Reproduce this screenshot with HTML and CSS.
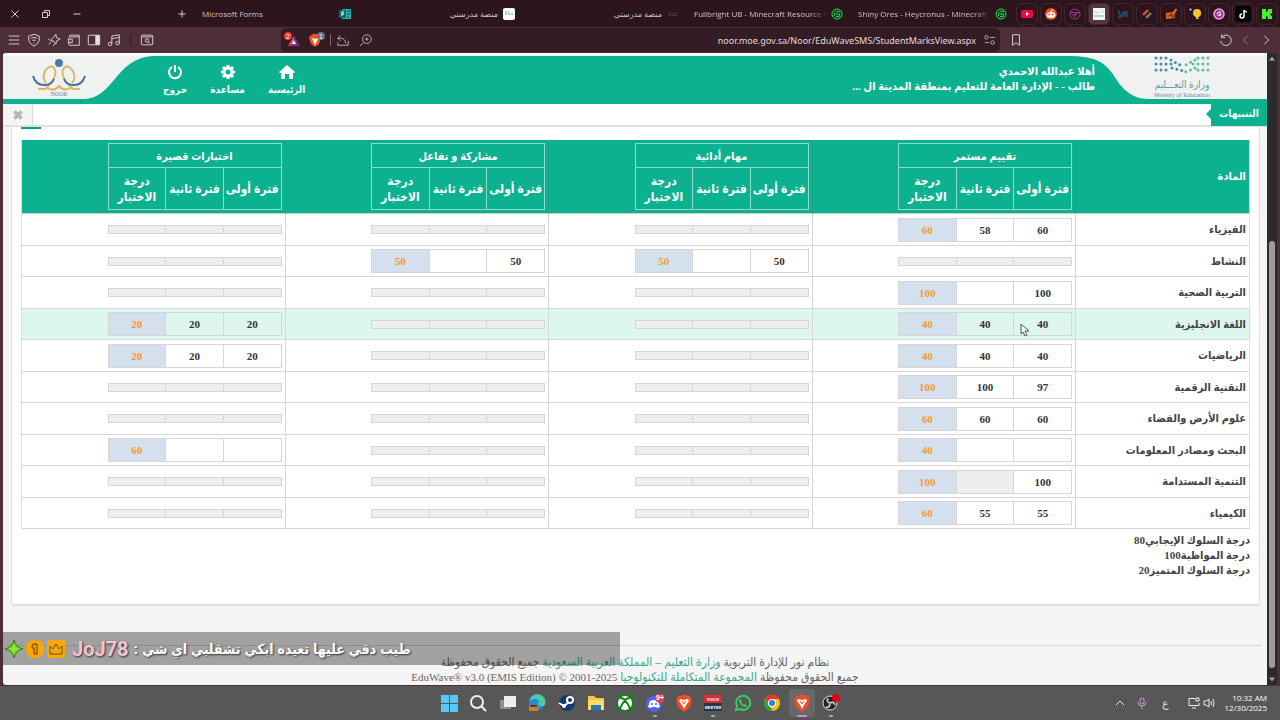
FILE: index.html
```html
<!DOCTYPE html>
<html lang="ar">
<head>
    <meta charset="UTF-8">
    <meta name="viewport" content="width=device-width, initial-scale=1.0">
    <title>نظام نور</title>
    <link rel="stylesheet" href="styles.css">
</head>
<body>

<div class="tabs">
    <div class="window-buttons">
        <button aria-label="Close"><svg viewBox="0 0 16 16"><path d="M4.500 4.500l7 7M11.500 4.500l-7 7"/></svg></button>
        <button aria-label="Restore"><svg viewBox="0 0 16 16"><path d="M4.500 6.500h5v5h-5zM6.500 6V4.500h5v5H10"/></svg></button>
        <button aria-label="Minimize"><svg viewBox="0 0 16 16"><path d="M4.500 8h7"/></svg></button>
    </div>
    <button class="new-tab" aria-label="New tab"><svg viewBox="0 0 16 16"><path d="M8 4.500v7M4.500 8h7"/></svg></button>
    <div class="tab"><span class="tab-title">Microsoft Forms</span>
        <svg viewBox="0 0 12 12"><rect x="3" y="1" width="9" height="10" rx="1" fill="#2bb5a3"/><path d="M8 3h3M8 6h3M8 9h2" stroke="#0b4a4c"/><rect y="2" width="7" height="8" rx="1" fill="#06706f"/><path d="M5 4H3v4M3 6h2" stroke="#fff"/></svg></div>
    <div class="tab"><span class="tab-title" dir="rtl">منصة مدرستي</span>
        <svg viewBox="0 0 12 12"><rect width="12" height="12" rx="2" fill="#fff"/><path d="M2 4h4M2 6h8" stroke="#4aa58e" stroke-dasharray="2 1"/></svg></div>
    <div class="tab"><span class="tab-title" dir="rtl">منصة مدرستي</span>
        <svg viewBox="0 0 12 12"><path d="M1 5.500h10M2 7.500h8" stroke="#35504f" stroke-dasharray="2 1"/></svg></div>
    <div class="tab"><span class="tab-title fade">Fullbright UB - Minecraft Resource P</span>
        <svg viewBox="0 0 12 12"><circle cx="6" cy="6" r="5" fill="#103a1e" stroke="#35cf63"/><path d="M9 3.500C5 2.500 3 5 3.500 8M5 8.500h3L8.500 6H5" stroke="#35cf63"/></svg></div>
    <div class="tab"><span class="tab-title fade">Shiny Ores - Heycronus - Minecraft R</span>
        <svg viewBox="0 0 12 12"><circle cx="6" cy="6" r="5" fill="#103a1e" stroke="#35cf63"/><path d="M9 3.500C5 2.500 3 5 3.500 8M5 8.500h3L8.500 6H5" stroke="#35cf63"/></svg></div>
    <div class="pinned">
        <button aria-label="YouTube"><svg viewBox="0 0 12 12"><rect y="2" width="12" height="8" rx="2" fill="#ee0b3c"/><path d="M5 4l3 2-3 2z" fill="#fff"/></svg></button>
        <button aria-label="Reddit"><svg viewBox="0 0 12 12"><circle cx="6" cy="6" r="6" fill="#f04a16"/><ellipse cx="6" cy="7" rx="4.500" ry="3" fill="#fff"/><circle cx="4.300" cy="6.500" r="1" fill="#f04a16"/><circle cx="7.700" cy="6.500" r="1" fill="#f04a16"/><path d="M6 4l.5-2 2 .5M4.300 8.500q1.700 1 3.400 0" stroke="#fff"/></svg></button>
        <button aria-label="Forum"><svg viewBox="0 0 12 12"><circle cx="6" cy="6" r="5" stroke="#a43a91"/><path d="M2 4.500h8M3 7l5-1M5 9l3-4" stroke="#a43a91"/></svg></button>
        <button class="current" aria-label="Noor"><svg viewBox="0 0 12 12"><path d="M0 0h12v12H0z" fill="#f4f4f2"/><path d="M1 3l4 2M11 3L7 5" stroke="#8cc8b5" stroke-dasharray="1 1"/><path d="M1 8h10" stroke="#73b6a6"/></svg></button>
        <button aria-label="VPN"><svg viewBox="0 0 12 12"><path d="M1 2l3 7 2-5h5M7 9V6h3v3M1 9h2" stroke="#255178" stroke-width="1.500"/></svg></button>
        <button aria-label="Layers"><svg viewBox="0 0 12 12"><path d="M1 6l5-5 2 2-5 5z" fill="#a73b2b"/><path d="M4 9l5-5 2 2-5 5z" fill="#37705c"/><path d="M2 7l5-5M5 10l5-5" stroke="#e17b52"/></svg></button>
        <button aria-label="Game"><svg viewBox="0 0 12 12"><path d="M1 5l7-1 3-4 1 2-2 3v5l-9 1z" fill="#e56b17"/><path d="M2 8h3V6h2v3h2V6" stroke="#4c2942"/></svg></button>
        <button aria-label="Balloon"><svg viewBox="0 0 12 12"><path d="M4 5q0-4 4-4t4 4-3 4l1 2H7V9Q4 8 4 5z" fill="#f3c42c"/><circle cx="1.500" cy="1.500" r="1" fill="#fff"/></svg></button>
        <button aria-label="Music"><svg viewBox="0 0 12 12"><circle cx="6" cy="6" r="5" fill="#973785" stroke="#f3a2df" stroke-width="1.500"/><path d="M8 4q-3-1-4 2 1 3 4 1V6H6" stroke="#fff"/></svg></button>
        <button aria-label="TikTok"><svg viewBox="0 0 16 16"><rect width="16" height="16" rx="3" fill="#050505"/><path d="M9 4v6q0 2-2 2t-2-2 2-2M9 4q1 2 3 2" stroke="#fff" stroke-width="1.500"/></svg></button>
        <button aria-label="Kick"><svg viewBox="0 0 12 12"><path d="M1 1h4v3h1V3h1V1h4v4h-1v1H9v1h1v1h1v3H7V9H6V8H5v3H1z" fill="#42f527"/></svg></button>
    </div>
</div>

<div class="toolbar">
    <div class="tools">
        <button aria-label="Menu"><svg viewBox="0 0 16 16"><path d="M2 3.500h12M2 8h12M2 12.500h12"/></svg></button>
        <button aria-label="Shields"><svg viewBox="0 0 16 16"><path d="M8 1.500l6 2v5q-1 4-6 6.500-5-2.500-6-6.500v-5zM4.500 6q3.500-2 7 0M6 8.500q2-1 4 0M8 11v1"/></svg></button>
        <button aria-label="Leo"><svg viewBox="0 0 16 16"><path d="M10 1.500l1 4 4 1.500-4 2-1 4-2-3.500-4-1 3-3zM5 10l-3 3M3 7L1 8M8 13l-1 2"/></svg></button>
        <button aria-label="Wallet"><svg viewBox="0 0 16 16"><path d="M2 5.500V13q0 1 1 1h11V4.500H3q-1-2 1-2h10v2M1 7h5v4H1"/></svg></button>
        <button aria-label="Sidebar"><svg viewBox="0 0 16 16"><rect x="1.500" y="2.500" width="13" height="11" rx="1"/><path d="M10 3h4v10h-4z" fill="#eadde1"/></svg></button>
        <button aria-label="Playlist"><svg viewBox="0 0 16 16"><circle cx="3.500" cy="12.500" r="2"/><circle cx="12" cy="11.500" r="2"/><path d="M5.500 12.500V3.500L14 2v9.500M5.500 6.500L14 5"/></svg></button>
    </div>
    <span class="sep"></span>
    <button class="tab-search" aria-label="Search tabs"><svg viewBox="0 0 16 16"><rect x="1.500" y="2.500" width="13" height="11" rx="1"/><path d="M2 4.500h12M9.500 10l2 2"/><circle cx="8" cy="8.500" r="2"/></svg></button>
    <div class="address">
        <button class="badge" aria-label="Brave rewards"><svg viewBox="0 0 16 16"><path d="M10 4l6 10H4z" fill="#a21e7b"/><path d="M10 4L4 14l6-3z" fill="#f0523a"/><path d="M10 4l6 10-6-3z" fill="#592ab5"/><path d="M10 8l2 4H8z" fill="#fff"/><circle cx="4" cy="4" r="4" fill="#e33c2f"/><text x="2" y="7">2</text></svg></button>
        <button class="badge" aria-label="Brave shields"><svg viewBox="0 0 16 16"><path d="M1 4l2-1 1-1h4l3 2 1 2-2 6-4 3-4-3-2-6z" fill="#f4531c"/><path d="M3 6l3 1 3-1-1 3-2 4-2-4z" fill="#fff"/><circle cx="12" cy="4" r="4" fill="#687382"/><text x="10" y="7">1</text></svg></button>
        <span class="sep light"></span>
        <button aria-label="Share"><svg viewBox="0 0 16 16"><path d="M5 3L2 6l3 3M2 6h4q5 1 5 6M2 11v3h12V9"/></svg></button>
        <button class="zoom" aria-label="Zoom"><svg viewBox="0 0 16 16"><circle cx="9" cy="7" r="5"/><path d="M5 11l-4 4M9 5v4M7 7h4"/></svg></button>
        <input type="text" aria-label="Address" value="noor.moe.gov.sa/Noor/EduWaveSMS/StudentMarksView.aspx">
        <button aria-label="Site settings"><svg viewBox="0 0 16 16"><circle cx="4" cy="5" r="2"/><circle cx="11" cy="11" r="2"/><path d="M8 5h6M2 11h5"/></svg></button>
    </div>
    <button class="bookmark" aria-label="Bookmark"><svg viewBox="0 0 16 16"><path d="M4 2h8v12l-4-3-4 3z"/></svg></button>
    <div class="history">
        <button aria-label="Reload"><svg viewBox="0 0 16 16"><path d="M3 5a6 6 0 1 1-1 4M3 1.500V5h4"/></svg></button>
        <button class="dim" aria-label="Forward"><svg viewBox="0 0 16 16"><path d="M10 3L5 8l5 5"/></svg></button>
        <button aria-label="Back"><svg viewBox="0 0 16 16"><path d="M6 3l5 5-5 5"/></svg></button>
    </div>
</div>

<div class="window">
    <main class="page" dir="rtl">
        <header class="header">
            <svg class="moe" viewBox="0 0 197 48" role="img" aria-label="وزارة التعليم">
                <path d="M0 0C42 0 40 20 55 34Q65 43 78 43H197V48H0z" fill="#0cb18f"/>
                <path d="M0 0C42 0 40 20 55 34Q65 43 78 43H197V0z" fill="#f0f1f1"/>
                <g class="dots-blue"><path d="M86 2h12M86 8h17M86 14h12"/><path d="M101 4l9 5M102 12l12 3"/></g>
                <g class="dots-green"><path d="M128 2h12M123 8h17M128 14h12"/><path d="M125 4l-13 7M125 12l-12 5"/></g>
                <text class="moe-ar" x="112" y="32" fill="#5a9ca5">وزارة التعـــليم</text>
                <text class="moe-en" x="112" y="41" fill="#6d93a5">Ministry of Education</text>
            </svg>
            <div class="user">
                <div>أهلا عبدالله الاحمدي</div>
                <div>طالب - - الإدارة العامة للتعليم بمنطقة المدينة ال ...</div>
            </div>
            <nav class="nav">
                <a href="#"><svg viewBox="0 0 16 16"><path d="M8 1l8 7-1 1h-1v6h-4v-5H6v5H2V9H1L0 8z" fill="#fff"/></svg>الرئيسية</a>
                <a href="#"><svg viewBox="0 0 16 16"><circle cx="8" cy="8" r="4" stroke="#fff" stroke-width="3"/><path d="M8 1v3M8 12v3M1 8h3M12 8h3M3 3l2 2M11 11l2 2M13 3l-2 2M5 11l-2 2" stroke="#fff" stroke-width="3"/></svg>مساعدة</a>
                <a href="#"><svg viewBox="0 0 16 16"><path d="M5 3a6 6 0 1 0 6 0M8 1v7" stroke="#fff" stroke-width="2"/></svg>خروج</a>
            </nav>
            <svg class="noor" viewBox="0 0 160 48" role="img" aria-label="نور">
                <path d="M160 0H153C112 0 112 43 80 43H0V48H160z" fill="#0cb18f"/>
                <circle cx="56" cy="7" r="4" fill="#4d79a8"/>
                <g stroke="#d9b964" stroke-width="2"><path d="M43 27C37 20 44 8 50 11 56 16 50 27 42 33H35"/><path d="M69 27C75 20 68 8 62 11 56 16 62 27 70 33H77"/><path d="M44 32Q51 36 56 30 61 36 68 32"/></g>
                <g stroke="#456fa0" stroke-width="2"><path d="M30 20Q33 30 43 29 49 28 51 23M82 20Q79 30 69 29 63 28 61 23"/></g>
                <text x="56" y="40" fill="#77818b">NOOR</text>
            </svg>
        </header>
        <div class="alerts">
            <div class="alerts-title">التنبيهات</div>
            <button class="alerts-close" aria-label="إغلاق"><svg viewBox="0 0 10 10"><path d="M2 2l6 6M8 2L2 8" stroke="#b5b5b5" stroke-width="3"/></svg></button>
        </div>

        <section class="card">
            <div class="mark"></div>
            <table class="grades">
                <thead>
                    <tr>
                        <th class="subject">المادة</th>
                        <th><table class="periods"><tr><th colspan="3">تقييم مستمر</th></tr><tr><th>فترة أولى</th><th>فترة ثانية</th><th>درجة الاختبار</th></tr></table></th>
                        <th><table class="periods"><tr><th colspan="3">مهام أدائية</th></tr><tr><th>فترة أولى</th><th>فترة ثانية</th><th>درجة الاختبار</th></tr></table></th>
                        <th><table class="periods"><tr><th colspan="3">مشاركة و تفاعل</th></tr><tr><th>فترة أولى</th><th>فترة ثانية</th><th>درجة الاختبار</th></tr></table></th>
                        <th><table class="periods"><tr><th colspan="3">اختبارات قصيرة</th></tr><tr><th>فترة أولى</th><th>فترة ثانية</th><th>درجة الاختبار</th></tr></table></th>
                    </tr>
                </thead>
                <tbody>
                    <tr>
                        <th>الفيزياء</th>
                        <td><table class="marks"><tr><td>60</td><td>58</td><td class="total">60</td></tr></table></td>
                        <td><table class="marks none"><tr><td></td><td></td><td></td></tr></table></td>
                        <td><table class="marks none"><tr><td></td><td></td><td></td></tr></table></td>
                        <td><table class="marks none"><tr><td></td><td></td><td></td></tr></table></td>
                    </tr>
                    <tr>
                        <th>النشاط</th>
                        <td><table class="marks none"><tr><td></td><td></td><td></td></tr></table></td>
                        <td><table class="marks"><tr><td>50</td><td></td><td class="total">50</td></tr></table></td>
                        <td><table class="marks"><tr><td>50</td><td></td><td class="total">50</td></tr></table></td>
                        <td><table class="marks none"><tr><td></td><td></td><td></td></tr></table></td>
                    </tr>
                    <tr>
                        <th>التربية الصحية</th>
                        <td><table class="marks"><tr><td>100</td><td></td><td class="total">100</td></tr></table></td>
                        <td><table class="marks none"><tr><td></td><td></td><td></td></tr></table></td>
                        <td><table class="marks none"><tr><td></td><td></td><td></td></tr></table></td>
                        <td><table class="marks none"><tr><td></td><td></td><td></td></tr></table></td>
                    </tr>
                    <tr class="hover">
                        <th>اللغة الانجليزية</th>
                        <td><table class="marks"><tr><td>40</td><td>40</td><td class="total">40</td></tr></table></td>
                        <td><table class="marks none"><tr><td></td><td></td><td></td></tr></table></td>
                        <td><table class="marks none"><tr><td></td><td></td><td></td></tr></table></td>
                        <td><table class="marks"><tr><td>20</td><td>20</td><td class="total">20</td></tr></table></td>
                    </tr>
                    <tr>
                        <th>الرياضيات</th>
                        <td><table class="marks"><tr><td>40</td><td>40</td><td class="total">40</td></tr></table></td>
                        <td><table class="marks none"><tr><td></td><td></td><td></td></tr></table></td>
                        <td><table class="marks none"><tr><td></td><td></td><td></td></tr></table></td>
                        <td><table class="marks"><tr><td>20</td><td>20</td><td class="total">20</td></tr></table></td>
                    </tr>
                    <tr>
                        <th>التقنية الرقمية</th>
                        <td><table class="marks"><tr><td>97</td><td>100</td><td class="total">100</td></tr></table></td>
                        <td><table class="marks none"><tr><td></td><td></td><td></td></tr></table></td>
                        <td><table class="marks none"><tr><td></td><td></td><td></td></tr></table></td>
                        <td><table class="marks none"><tr><td></td><td></td><td></td></tr></table></td>
                    </tr>
                    <tr>
                        <th>علوم الأرض والفضاء</th>
                        <td><table class="marks"><tr><td>60</td><td>60</td><td class="total">60</td></tr></table></td>
                        <td><table class="marks none"><tr><td></td><td></td><td></td></tr></table></td>
                        <td><table class="marks none"><tr><td></td><td></td><td></td></tr></table></td>
                        <td><table class="marks none"><tr><td></td><td></td><td></td></tr></table></td>
                    </tr>
                    <tr>
                        <th>البحث ومصادر المعلومات</th>
                        <td><table class="marks"><tr><td></td><td></td><td class="total">40</td></tr></table></td>
                        <td><table class="marks none"><tr><td></td><td></td><td></td></tr></table></td>
                        <td><table class="marks none"><tr><td></td><td></td><td></td></tr></table></td>
                        <td><table class="marks"><tr><td></td><td></td><td class="total">60</td></tr></table></td>
                    </tr>
                    <tr>
                        <th>التنمية المستدامة</th>
                        <td><table class="marks"><tr><td>100</td><td class="off"></td><td class="total">100</td></tr></table></td>
                        <td><table class="marks none"><tr><td></td><td></td><td></td></tr></table></td>
                        <td><table class="marks none"><tr><td></td><td></td><td></td></tr></table></td>
                        <td><table class="marks none"><tr><td></td><td></td><td></td></tr></table></td>
                    </tr>
                    <tr>
                        <th>الكيمياء</th>
                        <td><table class="marks"><tr><td>55</td><td>55</td><td class="total">60</td></tr></table></td>
                        <td><table class="marks none"><tr><td></td><td></td><td></td></tr></table></td>
                        <td><table class="marks none"><tr><td></td><td></td><td></td></tr></table></td>
                        <td><table class="marks none"><tr><td></td><td></td><td></td></tr></table></td>
                    </tr>
                </tbody>
            </table>
            <div class="behavior">
                <div>درجة السلوك الإيجابي80</div>
                <div>درجة المواظبة100</div>
                <div>درجة السلوك المتميز20</div>
            </div>
        </section>

        <footer class="footer">
            <div>نظام نور للإدارة التربوية <a href="#">وزارة التعليم – المملكة العربية السعودية</a> جميع الحقوق محفوظة</div>
            <div>جميع الحقوق محفوظة <a href="#">المجموعة المتكاملة للتكنولوجيا</a> <bdi dir="ltr">EduWave® v3.0 (EMIS Edition) © 2001-2025</bdi></div>
        </footer>
    </main>
    <div class="scrollbar">
        <svg viewBox="0 0 10 10"><path d="M5 3l3 4H2z" fill="#a5a5a5"/></svg>
        <div class="track"><div class="thumb"></div></div>
        <svg viewBox="0 0 10 10"><path d="M5 7L2 3h6z" fill="#a5a5a5"/></svg>
    </div>

    <!-- chat message over the page -->
    <div class="chat">
        <svg viewBox="0 0 18 18"><path d="M9 0q1 7 9 9-8 2-9 9-1-7-9-9 8-2 9-9z" fill="#73da21" stroke="#397b14"/><path d="M9 5v8M5 9h8" stroke="#a6f44b"/></svg>
        <svg viewBox="0 0 18 18"><path d="M5 0h8l5 5v8l-5 5H5l-5-5V5z" fill="#f6a609"/><path d="M7 4h4v10H8V8H6V6z" fill="#eba000" stroke="#6b4105"/></svg>
        <svg viewBox="0 0 18 18"><rect width="18" height="18" rx="2" fill="#f7a80c"/><path d="M3 6l3 3 3-5 3 5 3-3v8H3z" stroke="#704c0f"/></svg>
        <span class="chat-name">JoJ78</span>
        <span class="chat-text">: طيب دقي عليها تعيده ابكي تشقلبي اي شي</span>
    </div>
    <svg class="cursor" viewBox="0 0 10 14"><path d="M1 1v10l2-2 2 4 2-1-2-4h4z" fill="#e9fbf5" stroke="#555"/></svg>
</div>

<div class="taskbar">
    <div class="apps">
        <button aria-label="Start"><svg viewBox="0 0 18 18"><path d="M1 1h8v8H1zM10 1h8v8h-8zM1 10h8v8H1zM10 10h8v8h-8z" fill="#55c8f5"/></svg></button>
        <button aria-label="Search"><svg viewBox="0 0 18 18"><circle cx="8" cy="8" r="6" stroke="#eee" stroke-width="2"/><path d="M12 12l5 5" stroke="#eee" stroke-width="2"/></svg></button>
        <button aria-label="Task view"><svg viewBox="0 0 18 18"><path d="M1 6h11v9H1z" fill="#919191"/><path d="M5 2h12v11H5z" fill="#eee"/></svg></button>
        <button aria-label="Edge"><svg viewBox="0 0 18 18"><circle cx="9" cy="8" r="8" fill="#248ed5"/><path d="M1 7Q5-2 13 1q6 4 4 10-5 3-7-1 3-4-3-5-4 0-6 2z" fill="#51c7a7"/><path d="M1 11h9v6H1z" fill="#cc861e"/><path d="M2 11h7v2H2z" fill="#5b3b16"/></svg></button>
        <button aria-label="Steam"><svg viewBox="0 0 18 18"><circle cx="9" cy="9" r="8" fill="#123b6a"/><circle cx="12" cy="6" r="3" stroke="#fff" stroke-width="2"/><circle cx="6" cy="12" r="2" fill="#fff"/><path d="M1 9l5 3 5-4" stroke="#fff" stroke-width="2"/></svg></button>
        <button aria-label="Files"><svg viewBox="0 0 18 18"><path d="M1 2h6l2 2h8v12H1z" fill="#f5c53b"/><path d="M1 6h16v10H1z" fill="#ffda68"/><path d="M4 11h10v5H4z" fill="#267caf"/></svg></button>
        <button aria-label="Xbox"><svg viewBox="0 0 18 18"><rect x="1" y="1" width="16" height="16" rx="2" fill="#118117"/><circle cx="9" cy="9" r="7" fill="#fff"/><path d="M4 15Q6 9 9 7q3 2 5 8M4 4q3 0 5 2 2-2 5-2" stroke="#118117" stroke-width="2"/></svg></button>
        <button class="open" aria-label="Discord"><svg viewBox="0 0 18 18"><circle cx="8" cy="10" r="8" fill="#5461e8"/><path d="M4 7q4-2 8 0l2 6-3 1-1-1H6l-1 1-3-1z" fill="#fff"/><circle cx="6" cy="10" r="1" fill="#5461e8"/><circle cx="10" cy="10" r="1" fill="#5461e8"/><circle cx="14" cy="4" r="5" fill="#db4250"/><text x="10" y="6">9+</text></svg></button>
        <button aria-label="Brave"><svg viewBox="0 0 18 18"><path d="M3 2h3l1-1h5l1 1h2l2 4-2 7-6 5-6-5L1 6z" fill="#f14b27"/><path d="M5 5l4 1 4-1 1 2-3 4-2 4-2-4-3-4z" fill="#fff"/><path d="M7 7l2 3 2-3" stroke="#f14b27"/></svg></button>
        <button class="open voice" aria-label="Voicemeeter"><svg viewBox="0 0 18 18"><path d="M0 1h18v8H0z" fill="#d92c35"/><path d="M0 9h18v8H0z" fill="#263747"/><text x="9" y="7">VOICE</text><text x="9" y="15">MEETER</text></svg></button>
        <button aria-label="WhatsApp"><svg viewBox="0 0 18 18"><path d="M2 16l1-4a7 7 0 1 1 3 3z" stroke="#39cf5d" stroke-width="2"/><path d="M6 5l2 2-1 1q1 2 3 3l1-1 2 2-2 1Q6 12 5 7z" fill="#39cf5d"/></svg></button>
        <button aria-label="Chrome"><svg viewBox="0 0 18 18"><circle cx="9" cy="9" r="8" fill="#fbc116"/><path d="M2 5a8 8 0 0 1 14 0H9L6 11z" fill="#e53b2e"/><path d="M2 5l5 8 3 4A8 8 0 0 1 2 5z" fill="#2ba24c"/><circle cx="9" cy="9" r="4" fill="#fff"/><circle cx="9" cy="9" r="3" fill="#317ee8"/></svg></button>
        <button class="open active" aria-label="Brave window"><svg viewBox="0 0 18 18"><path d="M3 2h3l1-1h5l1 1h2l2 4-2 7-6 5-6-5L1 6z" fill="#f14b27"/><path d="M5 5l4 1 4-1 1 2-3 4-2 4-2-4-3-4z" fill="#fff"/><path d="M7 7l2 3 2-3" stroke="#f14b27"/></svg></button>
        <button class="open" aria-label="OBS"><svg viewBox="0 0 18 18"><circle cx="8" cy="9" r="7" fill="#222" stroke="#ddd"/><path d="M8 9Q4 8 6 4M8 9q4-2 5 2M8 9q0 5-4 4" stroke="#bbb" stroke-width="2"/><circle cx="14" cy="4" r="4" fill="#e60012"/></svg></button>
    </div>
    <div class="tray">
        <button aria-label="Hidden icons"><svg viewBox="0 0 12 12"><path d="M2 8l4-4 4 4"/></svg></button>
        <button aria-label="Microphone"><svg viewBox="0 0 12 12"><rect x="4" y="1" width="4" height="6" rx="2" stroke="#c79bcf"/><path d="M2 5q0 4 4 4t4-4M6 9v3" stroke="#c79bcf"/></svg></button>
        <button class="lang">ع</button>
        <div class="system">
            <svg viewBox="0 0 12 12"><path d="M7 1.500H1v7h10V6M4 11h4M8 1h3v3H8z"/></svg>
            <svg viewBox="0 0 12 12"><path d="M1 4h2l3-2v8L3 8H1zM8 4q1 2 0 4M10 2q2 4 0 8"/></svg>
        </div>
        <div class="clock">10:32 AM<br>12/30/2025</div>
    </div>
</div>

</body>
</html>
```

FILE: styles.css
```css
* {
    box-sizing: border-box;
}
body {
    margin: 0;
    height: 100vh;
    display: flex;
    flex-direction: column;
    overflow: hidden;
    background: #4e2e39;
    font-family: "Liberation Sans", "DejaVu Sans", sans-serif;
    font-size: 11px;
}
button {
    display: flex;
    align-items: center;
    justify-content: center;
    padding: 0;
    border: 0;
    background: none;
    color: #eadde1;
    cursor: pointer;
}
svg {
    display: block;
    flex: none;
    fill: none;
}
a {
    text-decoration: none;
}
table {
    border-spacing: 0;
}

/* tab strip */
.tabs {
    height: 27px;
    flex: none;
    display: flex;
    align-items: center;
    background: #2d151e;
    color: #d2c5ca;
    font-family: "Open Sans", "DejaVu Sans", sans-serif;
    font-size: 8px;
}
.window-buttons {
    display: flex;
    gap: 15px;
    padding-left: 7px;
}
.window-buttons svg, .new-tab svg {
    width: 16px;
    height: 16px;
    stroke: #d8cdd1;
}
.new-tab {
    margin-left: auto;
    margin-right: 6px;
}
.tab {
    flex: 0 1 164px;
    min-width: 0;
    display: flex;
    align-items: center;
    gap: 5px;
    padding: 0 9px 0 6px;
}
.tab-title {
    flex: 1;
    min-width: 0;
    overflow: hidden;
    white-space: nowrap;
}
.fade {
    -webkit-mask-image: linear-gradient(to right, #000 88%, transparent);
    mask-image: linear-gradient(to right, #000 88%, transparent);
}
.tab svg {
    width: 12px;
    height: 12px;
}
.pinned {
    display: flex;
    gap: 2px;
    padding-right: 2px;
}
.pinned button {
    width: 22px;
    height: 22px;
    border: 1px solid #44252f;
    border-radius: 5px;
}
.pinned .current {
    background: #543540;
}
.pinned svg {
    width: 12px;
    height: 12px;
}
.pinned [aria-label="TikTok"] svg {
    width: 16px;
    height: 16px;
}

/* address row */
.toolbar {
    height: 26px;
    flex: none;
    display: flex;
    align-items: center;
    padding: 0 7px;
}
.toolbar svg {
    width: 14px;
    height: 14px;
    stroke: #eadde1;
}
.tools {
    display: flex;
    gap: 6px;
}
.sep {
    width: 1px;
    height: 12px;
    margin: 0 9px;
    background: #2f1820;
}
.light {
    margin: 0;
    background: #7b656d;
}
.address {
    flex: 1;
    height: 24px;
    margin: 0 9px 0 127px;
    display: flex;
    align-items: center;
    gap: 5px;
    padding: 0 3px;
    border-radius: 5px;
    background: #341c25;
}
.address svg {
    stroke: #c9b9be;
}
.address .badge svg {
    width: 16px;
    height: 16px;
    stroke: none;
}
.badge + .badge {
    margin-left: 4px;
}
.address text {
    fill: #fff;
    font-size: 7px;
}
.zoom {
    margin-left: 4px;
}
.address input {
    flex: 1;
    min-width: 0;
    padding: 0 2px;
    border: 0;
    outline: 0;
    background: none;
    color: #e5dade;
    font: 9px "Noto Sans", sans-serif;
    text-align: right;
}
.history {
    display: flex;
    gap: 6px;
    margin-left: 196px;
}
.dim {
    opacity: .5;
}

/* browser content */
.window {
    flex: 1;
    min-height: 0;
    position: relative;
    display: flex;
    margin: 0 3px 1px;
}
.page {
    flex: 1;
    min-width: 0;
    overflow: hidden;
    border-radius: 3px 0 0 3px;
    background: #f5f5f5;
    color: #444;
    font-family: "Liberation Serif", "DejaVu Sans Condensed", "DejaVu Sans", serif;
}
.header {
    height: 51px;
    display: flex;
    border-top: 3px solid #fafcfb;
    background: #0cb18f;
    color: #fff;
    font-weight: bold;
}
.moe {
    width: 197px;
    height: 48px;
}
.dots-blue path, .dots-green path {
    stroke: #4590a0;
    stroke-width: 3;
    stroke-linecap: round;
    stroke-dasharray: 0 5;
}
.dots-green path {
    stroke: #65c195;
}
.header text {
    text-anchor: middle;
    font-size: 6px;
    font-weight: normal;
}
.header .moe-ar {
    font-size: 10px;
}
.header .moe-en {
    font-family: "Liberation Sans", sans-serif;
}
.user {
    z-index: 1;
    margin-right: -25px;
    padding-top: 8px;
    font-size: 11px;
    line-height: 15px;
    white-space: nowrap;
}
.nav {
    display: flex;
    gap: 23px;
    margin-right: auto;
    font-size: 10px;
}
.nav a {
    display: flex;
    flex-direction: column;
    align-items: center;
    gap: 2px;
    padding-top: 8px;
    color: #fff;
    line-height: 16px;
}
.nav svg {
    width: 16px;
    height: 16px;
}
.noor {
    width: 160px;
    height: 48px;
    background: #f0f1f1;
}
.alerts {
    height: 23px;
    display: flex;
    justify-content: space-between;
    border-bottom: 2px solid #e0e0e0;
    background: #fff;
}
.alerts-title {
    position: relative;
    height: 22px;
    width: 56px;
    background: #0cb18f;
    color: #fff;
    font-size: 10px;
    font-weight: bold;
    line-height: 20px;
    text-align: center;
}
.alerts-title::after {
    content: "";
    position: absolute;
    top: 5px;
    right: 100%;
    border: 5px solid transparent;
    border-right-color: #0cb18f;
    border-left-width: 0;
}
.alerts-close {
    width: 30px;
    border-right: 1px solid #ddd;
    background: #f5f5f5;
}
.alerts-close svg {
    width: 12px;
    height: 12px;
}
.card {
    margin: 0 7px 0 8px;
    padding: 0 9px 26px;
    background: #fff;
    border: solid #e0e0e0;
    border-width: 0 1px 2px;
    border-radius: 0 0 3px 3px;
}
.mark {
    width: 20px;
    height: 2px;
    margin: 0 auto 11px 0;
    background: #0c9f80;
}

/* grades */
.grades {
    width: 100%;
    table-layout: fixed;
    border: 1px solid #ddd;
    border-top: 0;
    border-bottom: 0;
}
.grades .subject {
    width: 173px;
}
.grades > thead > tr > th {
    height: 74px;
    padding: 0 3px;
    background: #0cb18f;
    border-bottom: 1px solid #ccc;
    color: #fff;
    text-align: right;
}
.grades > thead > tr > th + th {
    border-right: 1px solid #1ba588;
}
.periods, .marks {
    width: 174px;
    table-layout: fixed;
    border-collapse: collapse;
}
.periods th {
    height: 42px;
    padding: 0;
    border: 1px solid #8ddbc9;
    font-size: 12px;
    line-height: 16px;
    text-align: center;
}
.periods th[colspan] {
    height: 24px;
    font-size: 11px;
}
.grades > tbody > tr > th, .grades > tbody > tr > td {
    height: 32px;
    padding: 0 3px;
    border-bottom: 1px solid #d6d6d6;
    text-align: right;
}
.grades > tbody > tr:nth-child(even) > th {
    height: 31px;
}
.grades > tbody > tr:nth-child(even) > td {
    height: 31px;
}
.grades > tbody > tr > td {
    border-right: 1px solid #d6d6d6;
}
.hover {
    background: #ddf7ef;
}
.marks td {
    height: 23px;
    padding: 0;
    border: 1px solid #d6d6d6;
    color: #333;
    font-weight: bold;
    line-height: 12px;
    text-align: center;
}
.marks .total {
    background: #d5e0ef;
    color: #f49b2b;
}
.none td {
    height: 8px;
}
.none td, .marks .off {
    background: #eee;
}
.behavior {
    padding-top: 4px;
    font-weight: bold;
    line-height: 15px;
}
.footer {
    margin: 39px 5px 0 5px;
    padding-top: 9px;
    border-top: 1px solid #d8d8d8;
    color: #666;
    font-size: 12px;
    line-height: 15px;
    text-align: center;
}
.footer bdi {
    font-size: 11px;
}
.footer a {
    color: #35a98d;
}
.scrollbar {
    width: 10px;
    display: flex;
    flex-direction: column;
    background: #2b2b2b;
}
.scrollbar svg {
    width: 10px;
    height: 11px;
}
.track {
    flex: 1;
    padding: 0 2px;
}
.thumb {
    height: 70%;
    border-radius: 3px;
    background: #9c9c9c;
}
.track::before {
    content: "";
    display: block;
    height: 29%;
}
.chat {
    position: absolute;
    left: 0;
    bottom: 20px;
    width: 617px;
    height: 33px;
    display: flex;
    align-items: center;
    gap: 3px;
    padding-left: 2px;
    background: rgba(0, 0, 0, .34);
    color: #fff;
    font: bold 14px "Liberation Sans", "DejaVu Sans Condensed", sans-serif;
    text-shadow: 1px 1px 2px #333;
    white-space: nowrap;
}
.chat svg {
    width: 18px;
    height: 18px;
}
.chat-name {
    margin: 0 2px 0 4px;
    color: #f4c4d3;
    font: bold 20px Roboto, sans-serif;
}
.cursor {
    position: absolute;
    left: 1017px;
    top: 270px;
    width: 10px;
    height: 14px;
}

/* taskbar */
.taskbar {
    height: 34px;
    flex: none;
    display: grid;
    grid-template-columns: 1fr 408px 1fr;
    background: #575757;
}
.apps {
    grid-column: 2;
    display: flex;
    align-items: center;
    justify-content: space-between;
}
.apps button {
    position: relative;
    width: 26px;
    height: 28px;
    border-radius: 3px;
}
.apps svg {
    width: 18px;
    height: 18px;
}
.apps text {
    fill: #fff;
    font-size: 7px;
    font-weight: bold;
}
.voice text {
    font-size: 4px;
    text-anchor: middle;
}
.apps .active {
    background: #686868;
}
.open::after {
    content: "";
    position: absolute;
    bottom: 0;
    width: 4px;
    height: 2px;
    border-radius: 1px;
    background: #aaa;
}
.active::after {
    width: 10px;
    background: #cb8cd6;
}
.tray {
    display: flex;
    align-items: center;
    justify-content: flex-end;
    gap: 10px;
    padding-right: 13px;
    color: #fff;
}
.tray svg {
    width: 12px;
    height: 12px;
    stroke: #eee;
}
.lang {
    width: 16px;
    font-size: 11px;
}
.system {
    display: flex;
    gap: 3px;
    margin-left: 4px;
}
.clock {
    font: 8px/10px "Open Sans", sans-serif;
    text-align: right;
}
```
